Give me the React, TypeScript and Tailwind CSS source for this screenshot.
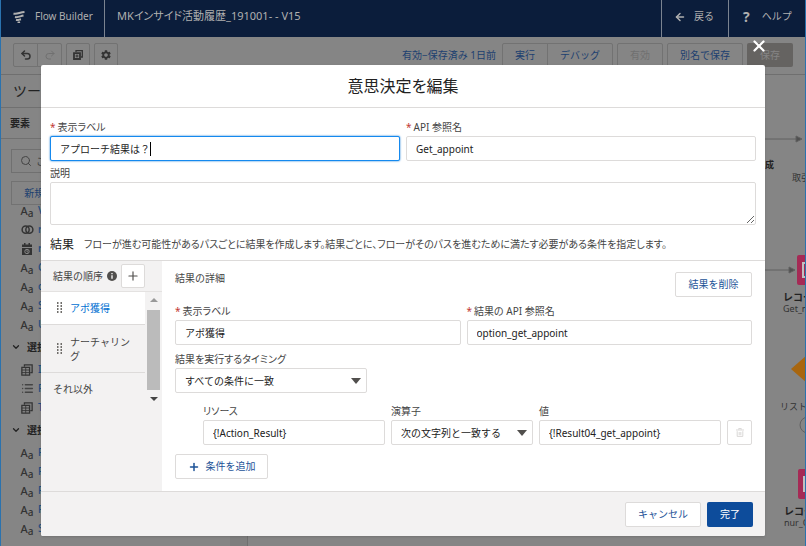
import React, { useState } from "react";
import {
  ArrowLeft,
  ChevronDown,
  List,
  Plus,
  Redo2,
  Search,
  Undo2,
  X,
} from "lucide-react";
import { MdSettings } from "react-icons/md";

type ResourceKind = "text" | "link" | "date" | "stack" | "list";

interface Resource {
  kind: ResourceKind;
  name: string;
}

const variables: Resource[] = [
  { kind: "text", name: "V" },
  { kind: "link", name: "r" },
  { kind: "date", name: "r" },
  { kind: "text", name: "C" },
  { kind: "text", name: "c" },
  { kind: "text", name: "S" },
  { kind: "text", name: "U" },
];

const choiceSets: Resource[] = [
  { kind: "stack", name: "I" },
  { kind: "list", name: "R" },
  { kind: "stack", name: "T" },
];

const choices: Resource[] = [
  { kind: "text", name: "R" },
  { kind: "text", name: "R" },
  { kind: "text", name: "R" },
  { kind: "text", name: "R" },
  { kind: "text", name: "S" },
];

const fieldClass =
  "block h-[25px] w-full rounded-xs border border-[#dddbda] bg-white px-[9px] text-[10px] leading-4 text-[#222] outline-none";
const labelClass =
  "text-[10px] leading-3 text-[#444] [font-feature-settings:'palt']";
const toolButton =
  "flex h-6 items-center justify-center border border-[#727272]";

const StackIcon = () => (
  <svg viewBox="0 0 14 14" className="size-3 fill-none stroke-[#333]">
    <path d="M4 3V1h9v9h-2M1 4h9v9H1z" strokeWidth="1.5" />
    <path d="M5.500 4v9M1 7h9M1 10h9" />
  </svg>
);

const ResourceIcon: React.FC<{ kind: ResourceKind }> = ({ kind }) => {
  switch (kind) {
    case "link":
      return (
        <svg
          viewBox="0 0 14 10"
          className="w-[13px] shrink-0 fill-none stroke-[#333]"
        >
          <circle cx="5" cy="5" r="3.8" strokeWidth="1.6" />
          <circle cx="9" cy="5" r="3.8" strokeWidth="1.6" />
        </svg>
      );
    case "date":
      return (
        <svg viewBox="0 0 12 12" className="size-3">
          <path
            d="M1 1.5h2V0h1.500v1.500h3V0H9v1.500h2V4H1zM1 5h10v7H1z"
            fill="#333"
          />
          <circle cx="6" cy="8.500" r="2.200" fill="none" stroke="#888" />
          <path d="M6 7v2h1.500" fill="none" stroke="#888" strokeWidth="0.800" />
        </svg>
      );
    case "stack":
      return <StackIcon />;
    case "list":
      return (
        <List className="size-[13px] shrink-0 text-[#444]" strokeWidth={2.5} />
      );
    default:
      return (
        <span className="text-[11px] leading-4 font-medium text-[#333]">
          A<sub className="text-[10px]">a</sub>
        </span>
      );
  }
};

const ResourceList: React.FC<{ items: Resource[] }> = ({ items }) => (
  <ul>
    {items.map((item, index) => (
      <li key={index} className="flex h-[19px] items-center gap-[5px] pl-5">
        <span className="flex w-3 shrink-0 justify-center">
          <ResourceIcon kind={item.kind} />
        </span>
        <span className="text-[10px] font-medium text-[#1d4c80]">
          {item.name}
        </span>
      </li>
    ))}
  </ul>
);

const GroupTitle: React.FC<{ children: React.ReactNode }> = ({ children }) => (
  <h3 className="flex h-[26px] items-center gap-1.5 pl-2.5 text-[10px] font-bold text-[#222]">
    <ChevronDown className="size-2.5" strokeWidth={3} />
    {children}
  </h3>
);

const CanvasNode: React.FC<{
  title: string;
  name: string;
  place: string;
}> = ({ title, name, place }) => (
  <div className={`absolute whitespace-nowrap ${place}`}>
    <div className="ml-3.5 flex h-[30px] w-8 items-center justify-center rounded-xs bg-[#a52a55]">
      <div className="h-4 w-[22px] border-2 border-[#c0c0c0]" />
    </div>
    <p className="mt-1.5 text-[10px] leading-3 font-bold text-[#222]">{title}</p>
    <p className="text-[9px] leading-3 text-[#333]">{name}</p>
  </div>
);

const Field: React.FC<{
  id: string;
  label: string;
  value: string;
  required?: boolean;
  className?: string;
}> = ({ id, label, value, required, className = "" }) => (
  <div className={`flex min-w-0 flex-col gap-[3px] ${className}`}>
    <label htmlFor={id} className={labelClass}>
      {required && <span className="mr-0.5 text-[#c23934]">*</span>}
      {label}
    </label>
    <input id={id} defaultValue={value} className={fieldClass} />
  </div>
);

const SelectField: React.FC<{
  id: string;
  label: string;
  options: string[];
  className?: string;
}> = ({ id, label, options, className = "" }) => (
  <div className={`flex flex-col gap-[3px] ${className}`}>
    <label htmlFor={id} className={labelClass}>
      {label}
    </label>
    <div className="relative">
      <select id={id} className={`appearance-none ${fieldClass}`}>
        {options.map((option) => (
          <option key={option}>{option}</option>
        ))}
      </select>
      <svg
        viewBox="0 0 10 6"
        className="pointer-events-none absolute top-2.5 right-1.5 w-2.5 fill-[#514f4d]"
      >
        <path d="M0 0h10L5 6z" />
      </svg>
    </div>
  </div>
);

const DragHandle = () => (
  <svg viewBox="0 0 5 12" className="h-3 w-[5px] shrink-0 fill-[#706e6b]">
    {[0, 3, 6, 9].map((y) => (
      <React.Fragment key={y}>
        <rect x="0" y={y} width="1.500" height="2" />
        <rect x="3.500" y={y} width="1.500" height="2" />
      </React.Fragment>
    ))}
  </svg>
);

const outcomes = ["アポ獲得", "ナーチャリング"];

const App: React.FC = () => {
  const [label, setLabel] = useState("アプローチ結果は？");
  const [selected, setSelected] = useState(outcomes[0]);

  return (
    <div className="relative min-h-screen overflow-hidden border-x border-[#2a72ae] bg-[#858585] font-['Noto_Sans','Noto_Sans_CJK_JP',sans-serif]">
      {/* Builder behind the dialog */}
      <div className="absolute inset-0 flex flex-col overflow-hidden">
        <header className="flex h-[37px] shrink-0 bg-[#0b1d3b] text-[10px] text-[#b0b0b0]">
          <div className="flex w-[104px] items-center gap-2.5 border-r border-[#7b8390] pb-1 pl-3">
            <svg
              viewBox="0 0 12 12"
              className="w-3 fill-none stroke-[#b0b0b0] stroke-2"
            >
              <path d="M.5 2.500c3 1 6-1 11-1.500M2 6c3 .8 5-.8 8.500-1.500M3 9c2 .5 3-.3 5-.8M4.500 11.500c1 .2 1.500 0 2.500-.4" />
            </svg>
            Flow Builder
          </div>
          <p className="flex flex-1 items-center pb-1 pl-3 text-[11px] [font-feature-settings:'palt']">
            MKインサイド活動履歴_191001- - V15
          </p>
          <a
            href="#back"
            className="flex w-[67px] items-center gap-2 border-l border-[#7b8390] pb-1 pl-3"
          >
            <ArrowLeft className="size-3" strokeWidth={3} />
            戻る
          </a>
          <a
            href="#help"
            className="flex w-[77px] items-center gap-3 border-l border-[#7b8390] pb-1 pl-3.5"
          >
            <span className="text-sm font-bold">?</span>
            ヘルプ
          </a>
        </header>

        <div className="flex h-[38px] shrink-0 items-start border-b border-[#6f6f6f] px-3 pt-1.5 text-[10px] text-[#1c3f70]">
          <button
            type="button"
            aria-label="元に戻す"
            className={`w-[25px] rounded-l-xs text-[#333] ${toolButton}`}
          >
            <Undo2 className="size-3" strokeWidth={3} />
          </button>
          <button
            type="button"
            aria-label="やり直す"
            className={`-ml-px w-[25px] rounded-r-xs text-[#707070] ${toolButton}`}
          >
            <Redo2 className="size-3" />
          </button>
          <button
            type="button"
            aria-label="コピー"
            className={`ml-1 w-6 rounded-xs ${toolButton}`}
          >
            <svg viewBox="0 0 10 10" className="size-2.5 fill-none stroke-[#333]">
              <path d="M3 2V.7h6.300V7H8" strokeWidth="1.300" />
              <path d="M1 3.200h6V9H1z" strokeWidth="1.800" />
              <path d="M4 4.500v3M2.500 6h3" />
            </svg>
          </button>
          <button
            type="button"
            aria-label="設定"
            className={`ml-1 w-6 rounded-xs text-[#333] ${toolButton}`}
          >
            <MdSettings className="size-3" />
          </button>
          <p className="ml-auto pr-1.5 leading-6">有効−保存済み 1日前</p>
          <button type="button" className={`w-[46px] rounded-l-xs ${toolButton}`}>
            実行
          </button>
          <button
            type="button"
            className={`-ml-px w-[66px] rounded-r-xs ${toolButton}`}
          >
            デバッグ
          </button>
          <button
            type="button"
            className={`ml-1 w-[46px] rounded-xs text-[#707070] ${toolButton}`}
          >
            有効
          </button>
          <button
            type="button"
            className={`ml-1 w-[76px] rounded-xs ${toolButton}`}
          >
            別名で保存
          </button>
          <button
            type="button"
            className="ml-1 h-6 w-[46px] rounded-xs bg-[#656361] text-[#858585]"
          >
            保存
          </button>
        </div>

        <div className="flex flex-1 overflow-hidden">
          <aside className="flex w-[247px] shrink-0 overflow-hidden border-r border-[#6f6f6f]">
            <div className="flex-1">
              <h2 className="h-[33px] border-b border-[#707070] pl-3 text-sm leading-8 text-[#222]">
                ツール
              </h2>
              <p className="h-[31px] border-b border-[#707070] pl-[9px] text-[10px] leading-[30px] font-bold text-[#222]">
                要素
              </p>
              <label className="mx-2.5 mt-2.5 flex h-6 items-center gap-1 border border-[#707070] pl-2 text-[#444]">
                <Search className="size-3" />
                <input
                  aria-label="検索"
                  defaultValue="この"
                  className="w-40 text-[10px] outline-none"
                />
              </label>
              <button
                type="button"
                className={`mt-2 ml-2.5 w-[86px] text-[10px] text-[#1c3f70] ${toolButton}`}
              >
                新規リソース
              </button>
              <div className="-mt-1 overflow-hidden">
                <ResourceList items={variables} />
                <GroupTitle>選択</GroupTitle>
                <ResourceList items={choiceSets} />
                <GroupTitle>選択</GroupTitle>
                <ResourceList items={choices} />
              </div>
            </div>
            <div className="w-[17px] bg-[#7e7e7e]" />
          </aside>

          {/* Flow canvas */}
          <main className="relative flex-1 overflow-hidden">
            <svg
              className="absolute top-0 right-0 h-full w-[60px]"
              fill="#505050"
              stroke="#606060"
            >
              <path d="M0 64H55" />
              <path d="M51 61l6 3-6 3z" />
              <path d="M0 195H48" />
              <path d="M44 192l6 3-6 3z" />
              <path d="M46 294l17-15v30z" fill="#a8660f" stroke="none" />
              <circle cx="63" cy="350" r="8" fill="none" />
            </svg>
            <p className="absolute top-[84px] right-[31px] text-[9px] leading-3 font-bold text-[#222]">
              作成
            </p>
            <p className="absolute top-[97px] left-[calc(100%-13px)] text-[9px] leading-3 whitespace-nowrap text-[#333]">
              取引
            </p>
            <CanvasNode
              title="レコード"
              name="Get_n"
              place="top-[180px] left-[calc(100%-22px)]"
            />
            <p className="absolute top-[326px] left-[calc(100%-25px)] text-[9px] leading-3 whitespace-nowrap text-[#333]">
              リスト
            </p>
            <CanvasNode
              title="レコード"
              name="nur_C"
              place="top-[394px] left-[calc(100%-21px)]"
            />
          </main>
        </div>
      </div>

      {/* Dialog */}
      <div className="relative px-10 pt-[65px] pb-2.5">
        <button
          type="button"
          aria-label="閉じる"
          className="absolute top-[37px] right-[37px] text-white"
        >
          <X className="size-[18px]" strokeWidth={3} />
        </button>

        <section
          role="dialog"
          aria-labelledby="dialog-title"
          className="overflow-hidden rounded-xs bg-white shadow"
        >
          <h1
            id="dialog-title"
            className="h-[43px] border-b border-[#dddbda] text-center text-base leading-[42px] text-[#222] [font-feature-settings:'palt']"
          >
            意思決定を編集
          </h1>

          <form onSubmit={(e) => e.preventDefault()}>
            <div className="px-[9px] pt-[13px]">
              <div className="grid grid-cols-2 gap-1.5">
                <div className="flex flex-col gap-[3px]">
                  <label htmlFor="label" className={labelClass}>
                    <span className="mr-0.5 text-[#c23934]">*</span>
                    表示ラベル
                  </label>
                  <div className="flex h-[25px] items-center rounded-xs border border-[#1589ee] bg-white pl-[9px] shadow-[0_0_2px_#0070d2]">
                    <input
                      id="label"
                      value={label}
                      onChange={(e) => setLabel(e.target.value)}
                      className="field-sizing-content border-r border-black text-[10px] leading-[14px] text-[#222] outline-none"
                    />
                  </div>
                </div>
                <Field
                  id="api-name"
                  label="API 参照名"
                  value="Get_appoint"
                  required
                />
              </div>
              <label
                htmlFor="description"
                className={`mt-1.5 block ${labelClass}`}
              >
                説明
              </label>
              <textarea
                id="description"
                className="mt-[3px] block h-[43px] w-full rounded-xs border border-[#dddbda] outline-none"
              />
              <div className="flex h-[35px] items-center gap-2.5 pt-1">
                <h2 className="text-[12px] text-[#222]">結果</h2>
                <p className="text-[10px] whitespace-nowrap text-[#444] [font-feature-settings:'palt']">
                  フローが進む可能性があるパスごとに結果を作成します。結果ごとに、フローがそのパスを進むために満たす必要がある条件を指定します。
                </p>
              </div>
            </div>

            <div className="flex border-t border-[#dddbda]">
              {/* Outcome order */}
              <div className="w-[121px] shrink-0 bg-[#f3f2f2]">
                <div className="flex h-[31px] items-center gap-1 border-b border-[#e4e2e1] pl-3">
                  <h3 className="text-[10px] text-[#444]">結果の順序</h3>
                  <svg viewBox="0 0 10 10" className="size-2.5">
                    <circle cx="5" cy="5" r="5" fill="#514f4d" />
                    <path
                      d="M5 2v1.200M5 4.200v3.500"
                      stroke="#fff"
                      strokeWidth="1.300"
                    />
                  </svg>
                  <button
                    type="button"
                    aria-label="結果を追加"
                    className="flex h-6 w-6 items-center justify-center rounded-xs border border-[#dddbda] bg-white text-[#514f4d]"
                  >
                    <Plus className="size-3.5" />
                  </button>
                </div>
                <div className="flex">
                  <div className="flex-1">
                    {outcomes.map((outcome) => (
                      <button
                        key={outcome}
                        type="button"
                        onClick={() => setSelected(outcome)}
                        className={`flex w-full items-center gap-2 border-b border-[#dddbda] pl-4 text-left text-[10px] leading-[14px] ${
                          outcome === selected
                            ? "h-[33px] bg-white text-[#0070d2]"
                            : "h-12 text-[#444]"
                        }`}
                      >
                        <DragHandle />
                        <span className="w-16">{outcome}</span>
                      </button>
                    ))}
                    <button
                      type="button"
                      className="block h-8 pl-3 text-left text-[10px] text-[#444]"
                    >
                      それ以外
                    </button>
                  </div>
                  <div className="flex w-[17px] flex-col items-center justify-between">
                    <svg viewBox="0 0 8 4" className="mt-1.5 w-2 fill-[#999]">
                      <path d="M0 4h8L4 0z" />
                    </svg>
                    <div className="h-20 w-[13px] bg-[#bbb]" />
                    <svg viewBox="0 0 8 4" className="mb-1 w-2 fill-[#444]">
                      <path d="M0 0h8L4 4z" />
                    </svg>
                  </div>
                </div>
              </div>

              {/* Outcome details */}
              <div className="min-w-0 flex-1 px-[13px] pb-3">
                <div className="flex items-start justify-between pt-[11px]">
                  <h3 className="text-[10px] leading-3 text-[#444]">
                    結果の詳細
                  </h3>
                  <button
                    type="button"
                    className="h-[25px] w-[77px] rounded-xs border border-[#dddbda] text-[10px] text-[#1b5297]"
                  >
                    結果を削除
                  </button>
                </div>
                <div className="mt-2 grid grid-cols-2 gap-1.5">
                  <Field
                    id="outcome-label"
                    label="表示ラベル"
                    value="アポ獲得"
                    required
                  />
                  <Field
                    id="outcome-api-name"
                    label="結果の API 参照名"
                    value="option_get_appoint"
                    required
                  />
                </div>
                <SelectField
                  id="when"
                  label="結果を実行するタイミング"
                  options={["すべての条件に一致", "いずれかの条件に一致"]}
                  className="mt-2 w-[192px]"
                />
                <div className="mt-3 flex items-end gap-1.5 pl-7">
                  <Field
                    id="resource"
                    label="リソース"
                    value="{!Action_Result}"
                    className="flex-1"
                  />
                  <SelectField
                    id="operator"
                    label="演算子"
                    options={["次の文字列と一致する", "次の文字列を含む"]}
                    className="w-[142px]"
                  />
                  <Field
                    id="value"
                    label="値"
                    value="{!Result04_get_appoint}"
                    className="flex-1"
                  />
                  <button
                    type="button"
                    aria-label="条件を削除"
                    className="flex h-[25px] w-[25px] items-center justify-center rounded-xs border border-[#dddbda]"
                  >
                    <svg
                      viewBox="0 0 10 11"
                      className="w-2 fill-none stroke-[#d0cecd]"
                    >
                      <path d="M0 2.500h10M3.500 2V.5h3V2M1.500 4v6.500h7V4M4 5v4M6 5v4" />
                    </svg>
                  </button>
                </div>
                <button
                  type="button"
                  className="mt-[9px] flex h-[25px] w-[93px] items-center justify-center gap-1.5 rounded-xs border border-[#dddbda] text-[10px] text-[#1b5297]"
                >
                  <Plus className="size-3" strokeWidth={3} />
                  条件を追加
                </button>
              </div>
            </div>

            <footer className="flex h-[45px] items-center justify-end gap-1.5 border-t border-[#dddbda] bg-[#f3f2f2] pr-3 text-[10px]">
              <button
                type="button"
                className="h-[25px] w-[76px] rounded-xs border border-[#dddbda] bg-white text-[#1b5297]"
              >
                キャンセル
              </button>
              <button
                type="submit"
                className="h-[25px] w-[46px] rounded-xs bg-[#0d4c9b] text-white"
              >
                完了
              </button>
            </footer>
          </form>
        </section>
      </div>
    </div>
  );
};

export default App;
